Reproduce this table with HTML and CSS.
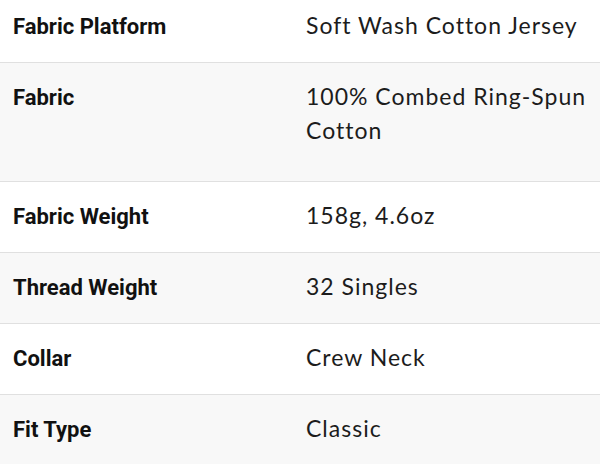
FILE: index.html
```html
<!DOCTYPE html>
<html>
<head>
<meta charset="utf-8">
<link rel="stylesheet" href="styles.css">
</head>
<body>
<div class="specs">
  <div class="row">
    <div class="label">Fabric Platform</div>
    <div class="value">Soft Wash Cotton Jersey</div>
  </div>
  <div class="row alt tall">
    <div class="label">Fabric</div>
    <div class="value">100% Combed Ring-Spun Cotton</div>
  </div>
  <div class="row">
    <div class="label">Fabric Weight</div>
    <div class="value">158g, 4.6oz</div>
  </div>
  <div class="row alt">
    <div class="label">Thread Weight</div>
    <div class="value">32 Singles</div>
  </div>
  <div class="row">
    <div class="label">Collar</div>
    <div class="value">Crew Neck</div>
  </div>
  <div class="row alt">
    <div class="label">Fit Type</div>
    <div class="value">Classic</div>
  </div>
</div>
</body>
</html>
```
FILE: styles.css
```css
html, body {
  margin: 0;
  padding: 0;
  background: #ffffff;
  overflow: hidden;
}
.specs {
  margin-top: -8px;
  width: 600px;
}
.row {
  display: flex;
  align-items: baseline;
  padding: 16px 0 20px 0;
  border-bottom: 1px solid #e0e0e0;
  line-height: 34px;
}
.row.alt {
  background: #f8f8f8;
}
.row.tall {
  padding-bottom: 34px;
}
.label {
  width: 293px;
  box-sizing: border-box;
  padding-left: 13px;
  font-family: Roboto, "Liberation Sans", sans-serif;
  font-weight: 700;
  font-size: 22px;
  line-height: 28px;
  color: #111111;
}
.value {
  flex: 1;
  padding-left: 13px;
  padding-right: 10px;
  font-family: Lato, "Liberation Sans", sans-serif;
  font-size: 23px;
  letter-spacing: 1px;
  color: #1c1c1c;
}
```
